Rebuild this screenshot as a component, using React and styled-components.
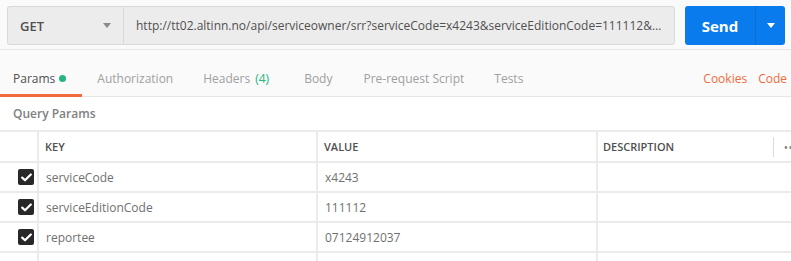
import React from "react";
import styled, { createGlobalStyle } from "styled-components";

const Global = createGlobalStyle`
  html, body {
    margin: 0;
    padding: 0;
    background: #fafafa;
    font-family: "Open Sans", "Liberation Sans", sans-serif;
    overflow: hidden;
  }
`;

const Page = styled.div`
  width: 791px;
  height: 261px;
  overflow: hidden;
`;

const TopBar = styled.div`
  display: flex;
  align-items: flex-start;
  padding: 6px 6px 0 7px;
  height: 50px;
  box-sizing: border-box;
  border-bottom: 1px solid #e6e6e6;
`;

const Method = styled.div`
  width: 116px;
  height: 39px;
  box-sizing: border-box;
  background: #ececec;
  border: 1px solid #d9d9d9;
  border-right: none;
  border-radius: 3px 0 0 3px;
  display: flex;
  align-items: center;
  justify-content: space-between;
  padding: 0 12px 0 12px;
  font-size: 13px;
  font-weight: 600;
  color: #505050;
`;

const Caret = styled.span`
  width: 0;
  height: 0;
  border-left: 4px solid transparent;
  border-right: 4px solid transparent;
  border-top: 5px solid ${(p) => p.$color || "#8a8a8a"};
`;

const Url = styled.div`
  width: 552px;
  height: 39px;
  box-sizing: border-box;
  background: #ececec;
  border: 1px solid #d9d9d9;
  border-radius: 0 3px 3px 0;
  display: flex;
  align-items: center;
  padding: 0 12px;
  font-size: 12px;
  color: #505050;
  white-space: nowrap;
  overflow: hidden;
`;

const UrlText = styled.span`
  overflow: hidden;
  text-overflow: ellipsis;
`;

const SendGroup = styled.div`
  margin-left: 10px;
  display: flex;
  height: 39px;
  border-radius: 3px;
  overflow: hidden;
  background: #097bed;
`;

const SendBtn = styled.div`
  width: 70px;
  display: flex;
  align-items: center;
  justify-content: center;
  color: #fff;
  font-size: 15px;
  font-weight: 700;
  border-right: 1px solid #0a6fd4;
`;

const SendArrow = styled.div`
  width: 29px;
  display: flex;
  align-items: center;
  justify-content: center;
`;

const Tabs = styled.div`
  display: flex;
  align-items: stretch;
  height: 41px;
  box-sizing: border-box;
  border-bottom: 1px solid #e6e6e6;
  padding-top: 7px;
  margin-top: 6px;
`;

const Tab = styled.div`
  display: flex;
  align-items: center;
  padding: 0 ${(p) => p.$pr ?? 15}px 0 ${(p) => p.$pl ?? 15}px;
  font-size: 12px;
  color: ${(p) => (p.$active ? "#505050" : "#a0a0a0")};
  border-bottom: 3px solid ${(p) => (p.$active ? "#f26b3a" : "transparent")};
  margin-bottom: -1px;
`;

const Count = styled.span`
  color: #26b47f;
  margin-left: 5px;
`;

const Dot = styled.span`
  width: 7px;
  height: 7px;
  border-radius: 50%;
  background: #26b47f;
  margin-left: 4px;
`;

const Links = styled.div`
  margin-left: auto;
  display: flex;
  align-items: center;
  gap: 11px;
  padding-right: 4px;
  padding-bottom: 3px;
`;

const Link = styled.span`
  font-size: 12px;
  color: #f26b3a;
`;

const Section = styled.div`
  background: #fff;
`;

const SectionTitle = styled.div`
  height: 33px;
  display: flex;
  align-items: center;
  padding-left: 13px;
  font-size: 12px;
  font-weight: 600;
  color: #808080;
  border-bottom: 2px solid #ebebeb;
`;

const Row = styled.div`
  display: grid;
  grid-template-columns: 37px 277px 278px 1fr;
  column-gap: 2px;
  background: #ebebeb;
  border-bottom: 2px solid #ebebeb;
  height: ${(p) => p.$h || 28}px;
`;

const Cell = styled.div`
  background: #fff;
  display: flex;
  align-items: center;
  padding-left: ${(p) => p.$pl ?? 7}px;
  font-size: ${(p) => (p.$head ? 11 : 12)}px;
  font-weight: ${(p) => (p.$head ? 600 : 400)};
  color: ${(p) => (p.$head ? "#505050" : "#707070")};
  white-space: nowrap;
  overflow: hidden;
  position: relative;
`;

const CheckCell = styled(Cell)`
  justify-content: flex-end;
  padding: 0 3px 0 0;
`;

const Check = styled.span`
  width: 16px;
  height: 16px;
  border-radius: 2px;
  background: #282828;
  display: flex;
  align-items: center;
  justify-content: center;
`;

const Divider = styled.span`
  position: absolute;
  left: 175px;
  top: 5px;
  bottom: 4px;
  width: 1px;
  background: #dcdcdc;
`;

const More = styled.span`
  position: absolute;
  left: 186px;
  color: #808080;
  font-size: 10px;
  letter-spacing: 1px;
`;

const CheckBox = () => (
  <Check>
    <svg width="11" height="9" viewBox="0 0 11 9">
      <path d="M1.2 4.6 L4 7.3 L9.8 1.5" stroke="#fff" strokeWidth="2.2" fill="none" strokeLinecap="round" strokeLinejoin="round" />
    </svg>
  </Check>
);

const params = [
  { key: "serviceCode", value: "x4243" },
  { key: "serviceEditionCode", value: "111112" },
  { key: "reportee", value: "07124912037" },
];

export default function App() {
  return (
    <Page>
      <Global />
      <TopBar>
        <Method>
          GET
          <Caret />
        </Method>
        <Url>
          <UrlText>
            http://tt02.altinn.no/api/serviceowner/srr?serviceCode=x4243&amp;serviceEditionCode=111112&amp;reportee=07124912037
          </UrlText>
        </Url>
        <SendGroup>
          <SendBtn>Send</SendBtn>
          <SendArrow>
            <Caret $color="#fff" />
          </SendArrow>
        </SendGroup>
      </TopBar>
      <Tabs>
        <Tab $active $pl={13} $pr={16}>
          Params
          <Dot />
        </Tab>
        <Tab>Authorization</Tab>
        <Tab $pr={20}>
          Headers<Count>(4)</Count>
        </Tab>
        <Tab $pr={16}>Body</Tab>
        <Tab>Pre-request Script</Tab>
        <Tab>Tests</Tab>
        <Links>
          <Link>Cookies</Link>
          <Link>Code</Link>
        </Links>
      </Tabs>
      <Section>
        <SectionTitle>Query Params</SectionTitle>
        <Row $h={29}>
          <Cell $head />
          <Cell $head $pl={6}>KEY</Cell>
          <Cell $head $pl={6}>VALUE</Cell>
          <Cell $head $pl={5}>
            DESCRIPTION
            <Divider />
            <More>•••</More>
          </Cell>
        </Row>
        {params.map((p) => (
          <Row key={p.key}>
            <CheckCell>
              <CheckBox />
            </CheckCell>
            <Cell>{p.key}</Cell>
            <Cell>{p.value}</Cell>
            <Cell />
          </Row>
        ))}
        <Row $h={20}>
          <Cell />
          <Cell />
          <Cell />
          <Cell />
        </Row>
      </Section>
    </Page>
  );
}
